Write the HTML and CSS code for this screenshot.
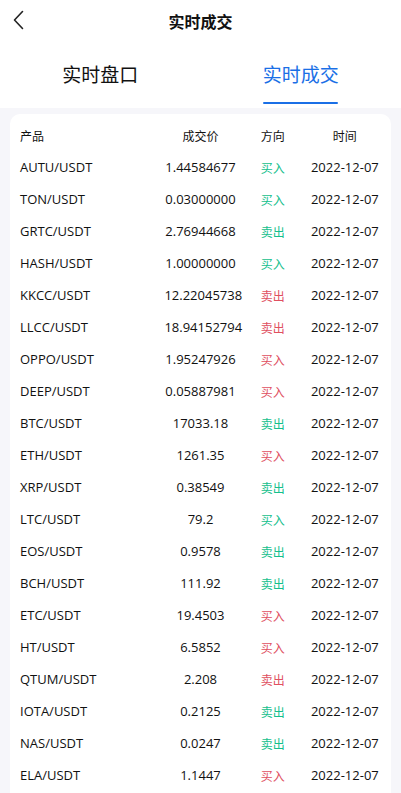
FILE: index.html
```html
<!DOCTYPE html>
<html lang="zh">
<head>
<meta charset="utf-8">
<title>实时成交</title>
<link rel="stylesheet" href="styles.css">
</head>
<body>
<div class="page">
  <header class="nav">
    <span class="back">
      <svg width="24" height="24" viewBox="0 0 24 24"><polyline points="22.5,11.5 14.5,20 22.5,28.5" transform="translate(0,-8)" fill="none" stroke="#222" stroke-width="1.6" stroke-linecap="round" stroke-linejoin="round"/></svg>
    </span>
    <h1 class="title">实时成交</h1>
  </header>
  <nav class="tabs">
    <div class="tab"><span class="tab-label">实时盘口</span></div>
    <div class="tab active"><span class="tab-label">实时成交</span><span class="bar"></span></div>
  </nav>
  <main class="content">
    <section class="card">
      <div class="row head">
        <span class="c-name">产品</span><span class="c-price">成交价</span><span class="c-dir">方向</span><span class="c-time">时间</span>
      </div>
      <div class="row"><span class="c-name">AUTU/USDT</span><span class="c-price">1.44584677</span><span class="c-dir up">买入</span><span class="c-time">2022-12-07</span></div>
      <div class="row"><span class="c-name">TON/USDT</span><span class="c-price">0.03000000</span><span class="c-dir up">买入</span><span class="c-time">2022-12-07</span></div>
      <div class="row"><span class="c-name">GRTC/USDT</span><span class="c-price">2.76944668</span><span class="c-dir up">卖出</span><span class="c-time">2022-12-07</span></div>
      <div class="row"><span class="c-name">HASH/USDT</span><span class="c-price">1.00000000</span><span class="c-dir up">买入</span><span class="c-time">2022-12-07</span></div>
      <div class="row"><span class="c-name">KKCC/USDT</span><span class="c-price">12.22045738</span><span class="c-dir down">卖出</span><span class="c-time">2022-12-07</span></div>
      <div class="row"><span class="c-name">LLCC/USDT</span><span class="c-price">18.94152794</span><span class="c-dir down">卖出</span><span class="c-time">2022-12-07</span></div>
      <div class="row"><span class="c-name">OPPO/USDT</span><span class="c-price">1.95247926</span><span class="c-dir down">买入</span><span class="c-time">2022-12-07</span></div>
      <div class="row"><span class="c-name">DEEP/USDT</span><span class="c-price">0.05887981</span><span class="c-dir down">买入</span><span class="c-time">2022-12-07</span></div>
      <div class="row"><span class="c-name">BTC/USDT</span><span class="c-price">17033.18</span><span class="c-dir up">卖出</span><span class="c-time">2022-12-07</span></div>
      <div class="row"><span class="c-name">ETH/USDT</span><span class="c-price">1261.35</span><span class="c-dir down">买入</span><span class="c-time">2022-12-07</span></div>
      <div class="row"><span class="c-name">XRP/USDT</span><span class="c-price">0.38549</span><span class="c-dir up">卖出</span><span class="c-time">2022-12-07</span></div>
      <div class="row"><span class="c-name">LTC/USDT</span><span class="c-price">79.2</span><span class="c-dir up">买入</span><span class="c-time">2022-12-07</span></div>
      <div class="row"><span class="c-name">EOS/USDT</span><span class="c-price">0.9578</span><span class="c-dir up">卖出</span><span class="c-time">2022-12-07</span></div>
      <div class="row"><span class="c-name">BCH/USDT</span><span class="c-price">111.92</span><span class="c-dir up">卖出</span><span class="c-time">2022-12-07</span></div>
      <div class="row"><span class="c-name">ETC/USDT</span><span class="c-price">19.4503</span><span class="c-dir down">买入</span><span class="c-time">2022-12-07</span></div>
      <div class="row"><span class="c-name">HT/USDT</span><span class="c-price">6.5852</span><span class="c-dir down">买入</span><span class="c-time">2022-12-07</span></div>
      <div class="row"><span class="c-name">QTUM/USDT</span><span class="c-price">2.208</span><span class="c-dir down">卖出</span><span class="c-time">2022-12-07</span></div>
      <div class="row"><span class="c-name">IOTA/USDT</span><span class="c-price">0.2125</span><span class="c-dir up">卖出</span><span class="c-time">2022-12-07</span></div>
      <div class="row"><span class="c-name">NAS/USDT</span><span class="c-price">0.0247</span><span class="c-dir up">卖出</span><span class="c-time">2022-12-07</span></div>
      <div class="row"><span class="c-name">ELA/USDT</span><span class="c-price">1.1447</span><span class="c-dir down">买入</span><span class="c-time">2022-12-07</span></div>
    </section>
  </main>
</div>
</body>
</html>
```
FILE: styles.css
```css
* { box-sizing: border-box; }
html, body {
  margin: 0;
  padding: 0;
  background: #f6f6fa;
  font-family: "Open Sans", "Noto Sans CJK SC", sans-serif;
  color: #111;
}
.page {
  min-height: 100vh;
  display: flex;
  flex-direction: column;
}
.nav {
  height: 42px;
  background: #fff;
  display: flex;
  align-items: center;
  justify-content: center;
  position: relative;
}
.back {
  position: absolute;
  left: 0;
  top: 8px;
  width: 30px;
  height: 24px;
  display: block;
}
.back svg { display: block; }
.title {
  margin: 0;
  font-size: 16px;
  font-weight: 700;
  font-family: "Noto Sans CJK SC", sans-serif;
  color: #111;
  line-height: 42px;
}
.tabs {
  display: flex;
  background: #fff;
  height: 66px;
}
.tab {
  flex: 1;
  display: flex;
  flex-direction: column;
  align-items: center;
  padding-top: 19px;
}
.tab-label {
  font-family: "Noto Sans CJK SC", sans-serif;
  font-size: 19px;
  line-height: 26px;
  color: #111;
}
.tab.active .tab-label { color: #1a6fe6; }
.bar {
  display: block;
  margin-top: 15px;
  width: 75px;
  height: 2px;
  background: #1a6fe6;
  border-radius: 1px;
}
.content {
  flex: 1;
  padding: 6px 10px 0;
}
.card {
  background: #fff;
  border-radius: 10px;
  padding: 5px 10px 12px;
}
.row {
  display: flex;
  align-items: center;
  height: 32px;
  font-size: 13px;
  color: #111;
}
.row.head { font-size: 12px; font-family: "Noto Sans CJK SC", sans-serif; }
.c-name { width: 40%; text-align: left; }
.c-price { width: 20%; text-align: center; white-space: nowrap; }
.c-dir { width: 20%; text-align: center; font-size: 12px; font-family: "Noto Sans CJK SC", sans-serif; }
.c-time { width: 20%; text-align: center; white-space: nowrap; }
.up { color: #14c08c; }
.down { color: #e0505f; }
```
